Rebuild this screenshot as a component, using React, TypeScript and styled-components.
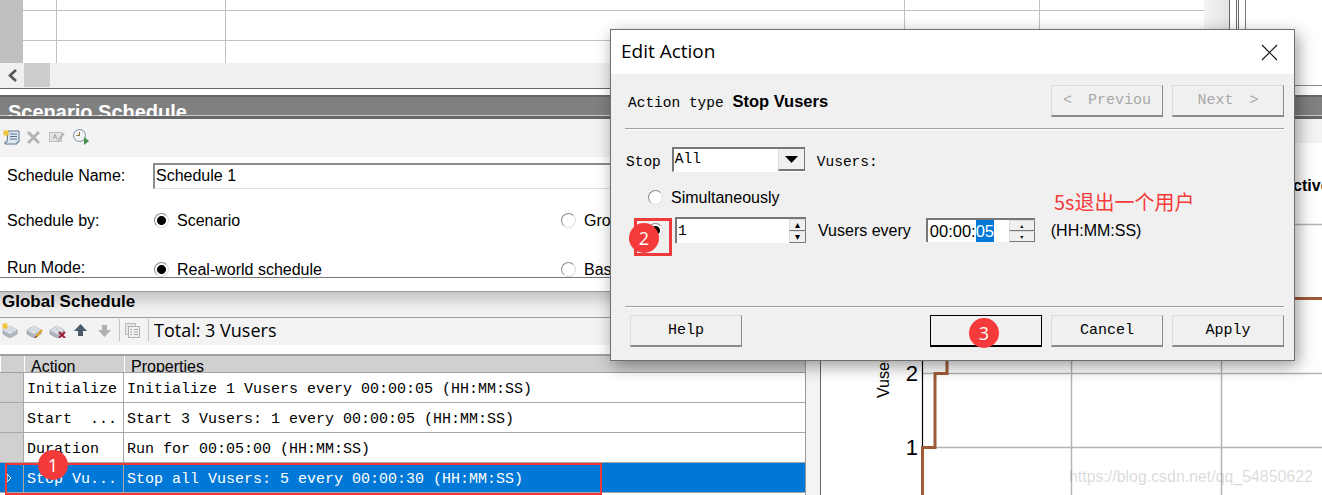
import { createGlobalStyle, styled } from 'styled-components';

const GlobalStyle = createGlobalStyle`
  html, body {
    margin: 0;
    padding: 0;
    background: #fff;
  }
  * {
    box-sizing: border-box;
  }
`;

const MONO = `"Liberation Mono", monospace`;
const SANS = `"Liberation Sans", Arial, sans-serif`;
const UI = `"Open Sans", "Noto Sans", sans-serif`;

type Step = { action: string; detail: string; selected?: boolean };

const STEPS: Step[] = [
  { action: 'Initialize', detail: 'Initialize 1 Vusers every 00:00:05 (HH:MM:SS)' },
  { action: 'Start  ...', detail: 'Start 3 Vusers: 1 every 00:00:05 (HH:MM:SS)' },
  { action: 'Duration', detail: 'Run for 00:05:00 (HH:MM:SS)' },
  { action: 'Stop Vu...', detail: 'Stop all Vusers: 5 every 00:00:30 (HH:MM:SS)', selected: true },
];

// 16px toolbar icons, redrawn by hand
const Star = () => <path d="M3 0l.8 2 2-.8-.8 2 2 .8-2 .8.8 2-2-.8-.8 2-.8-2-2 .8.8-2-2-.8 2-.8-.8-2 2 .8z" fill="#f2c23a" />;

const ScriptIcon = () => (
  <svg width="17" height="16" viewBox="0 0 17 16">
    <path d="M5 2h11v11H14v2H2v-2h2z" fill="#dfe8f2" stroke="#5a7590" />
    <path d="M7 5h7M7 7.500h7M7 10h7" stroke="#54708c" />
    <Star />
  </svg>
);

const CrossIcon = () => (
  <svg width="13" height="13" viewBox="0 0 13 13">
    <path d="M1 1l11 11M12 1L1 12" stroke="#b4b4b4" strokeWidth="3" />
  </svg>
);

const EditIcon = () => (
  <svg width="16" height="12" viewBox="0 0 16 12">
    <rect x="0.500" y="1.500" width="12" height="9" fill="#e4e4e4" stroke="#bdbdbd" />
    <path d="M4 8l2-5 2 5M5 6.500h2" stroke="#aaa" fill="none" />
    <path d="M9 10l6-8" stroke="#b4b4b4" strokeWidth="2" />
  </svg>
);

const ClockIcon = () => (
  <svg width="17" height="16" viewBox="0 0 17 16">
    <circle cx="6.500" cy="6.500" r="6" fill="#eef2f7" stroke="#7d8da0" />
    <path d="M6.500 3v3.500H3.500" stroke="#8a6a2a" fill="none" />
    <path d="M11 8l5 4-5 4z" fill="#3f8f4f" />
  </svg>
);

const Brick = () => (
  <>
    <path d="M1 8l7-4 7 4v4l-7 4-7-4z" fill="#aeb7c0" stroke="#8a95a0" strokeWidth="0.600" />
    <path d="M1 8l7 4 7-4-7-4z" fill="#dfe4e9" />
    <ellipse cx="6" cy="7" rx="1.800" ry="1" fill="#fff" stroke="#9aa4ae" strokeWidth="0.500" />
    <ellipse cx="10" cy="8" rx="1.800" ry="1" fill="#fff" stroke="#9aa4ae" strokeWidth="0.500" />
  </>
);

const BrickNewIcon = () => (
  <svg width="17" height="16" viewBox="0 0 17 16">
    <Brick />
    <Star />
  </svg>
);

const BrickEditIcon = () => (
  <svg width="17" height="16" viewBox="0 0 17 16">
    <Brick />
    <path d="M10 15l6-7" stroke="#e3a52c" strokeWidth="2.200" />
    <path d="M9 16l1.500-2" stroke="#7a3b2a" strokeWidth="1.200" />
  </svg>
);

const BrickDeleteIcon = () => (
  <svg width="17" height="16" viewBox="0 0 17 16">
    <Brick />
    <path d="M10 10l6 6M16 10l-6 6" stroke="#9c2036" strokeWidth="2" />
  </svg>
);

const ArrowIcon = ({ $down, $color }: { $down?: boolean; $color: string }) => (
  <svg width="13" height="13" viewBox="0 0 13 13">
    <path d={$down ? 'M4 1h5v5h4l-6.500 7L0 6h4z' : 'M6.500 0L13 7H9v5H4V7H0z'} fill={$color} />
  </svg>
);

const CopyIcon = () => (
  <svg width="15" height="15" viewBox="0 0 15 15">
    <rect x="0.500" y="0.500" width="10" height="11" fill="#e6e6e6" stroke="#bcbcbc" />
    <rect x="3.500" y="3.500" width="11" height="11" fill="#f0f0f0" stroke="#b0b0b0" />
    <path d="M5 6.500h2M9 6.500h4M5 9h2M9 9h4M5 11.500h2M9 11.500h4" stroke="#a8a8a8" />
  </svg>
);

const ActionChart = () => (
  <ChartSvg viewBox="0 0 501 352">
    <g stroke="#b4b4b4" strokeWidth="1.500">
      <path d="M101 81.500H501M101 155.500H501M101 230.500H501M101 304.500H501" />
      <path d="M250.500 0V352M400.500 0V352" />
    </g>
    <path d="M101.500 0V352" stroke="#000" strokeWidth="1.200" />
    <path d="M101.500 352V304.500H114V230.500H126V155.500H501" fill="none" stroke="#a05a38" strokeWidth="3" />
    <text x="428.500" y="48" fontFamily={SANS} fontSize="16" fontWeight="700" fill="#000">
      Interactive
    </text>
    <text transform="translate(68 255) rotate(-90)" fontFamily={SANS} fontSize="16" fill="#000">
      Vusers
    </text>
    <text x="97" y="238" textAnchor="end" fontFamily={SANS} fontSize="22" fill="#000">
      2
    </text>
    <text x="97" y="312" textAnchor="end" fontFamily={SANS} fontSize="22" fill="#000">
      1
    </text>
  </ChartSvg>
);

const App = () => {
  return (
    <Page>
      <GlobalStyle />

      <TopPane>
        <GridPane>
          <GridRows>
            <GridRow $height={11} />
            <GridRow $height={30} />
            <GridRow $height={22} $last />
          </GridRows>
          <HScroll>
            <ScrollArrow>
              <svg width="11" height="13" viewBox="0 0 11 13">
                <path d="M9 1L3 6.500 9 12" fill="none" stroke="#555" strokeWidth="2.600" />
              </svg>
            </ScrollArrow>
            <ScrollThumb />
          </HScroll>
        </GridPane>
        <SideStrip>
          <SideShade />
          <SideLines />
        </SideStrip>
      </TopPane>

      <ScenarioBar>
        <ScenarioTitle>Scenario Schedule</ScenarioTitle>
      </ScenarioBar>

      <LowerPane>
        <LeftPane>
          <Toolbar $height={38} $pad={3} $lift={2}>
            <ScriptIcon />
            <IconSlot $left={7}><CrossIcon /></IconSlot>
            <IconSlot $left={9}><EditIcon /></IconSlot>
            <IconSlot $left={8}><ClockIcon /></IconSlot>
          </Toolbar>

          <FormArea>
            <FormRow $height={26} $top={6}>
              <FieldLabel>Schedule Name:</FieldLabel>
              <NameInput>Schedule 1</NameInput>
            </FormRow>
            <FormRow $height={21} $top={21}>
              <FieldLabel>Schedule by:</FieldLabel>
              <Option>
                <Radio $checked />
                Scenario
              </Option>
              <Option>
                <Radio />
                Group
              </Option>
            </FormRow>
            <FormRow $height={21} $top={28}>
              <FieldLabel $up={3}>Run Mode:</FieldLabel>
              <Option>
                <Radio $checked />
                Real-world schedule
              </Option>
              <Option>
                <Radio />
                Basic
              </Option>
            </FormRow>
          </FormArea>

          <GlobalHeader>Global Schedule</GlobalHeader>

          <Toolbar $height={27} $pad={2} $lift={3}>
            <BrickNewIcon />
            <IconSlot $left={7}><BrickEditIcon /></IconSlot>
            <IconSlot $left={6}><BrickDeleteIcon /></IconSlot>
            <IconSlot $left={8}><ArrowIcon $color="#4a5a68" /></IconSlot>
            <IconSlot $left={11}><ArrowIcon $down $color="#b0b0b0" /></IconSlot>
            <ToolDivider $left={8} />
            <IconSlot $left={5}><CopyIcon /></IconSlot>
            <ToolDivider $left={8} />
            <TotalText>Total: 3 Vusers</TotalText>
          </Toolbar>

          <ScheduleTable>
            <HeaderRow>
              <HeaderCell />
              <HeaderCell>Action</HeaderCell>
              <HeaderCell>Properties</HeaderCell>
            </HeaderRow>
            {STEPS.map((step) => (
              <StepRow key={step.action} $selected={step.selected}>
                <Selector $selected={step.selected}>
                  {step.selected && (
                    <svg width="6" height="10" viewBox="0 0 6 10">
                      <path d="M1 1l4 4-4 4z" fill="none" stroke="#fff" />
                    </svg>
                  )}
                </Selector>
                <ActionCell>{step.action}</ActionCell>
                <DetailCell>{step.detail}</DetailCell>
              </StepRow>
            ))}
          </ScheduleTable>
        </LeftPane>

        <RightPane>
          <Gutter />
          <ChartPane>
            <ChartToolbar />
            <ActionChart />
          </ChartPane>
        </RightPane>
      </LowerPane>

      <Watermark>https://blog.csdn.net/qq_54850622</Watermark>

      <Dialog>
        <TitleBar>
          <DialogTitle>Edit Action</DialogTitle>
          <CloseGlyph width="17" height="17" viewBox="0 0 17 17">
            <path d="M1 1l15 15M16 1L1 16" stroke="#111" strokeWidth="1.100" />
          </CloseGlyph>
        </TitleBar>
        <DialogBody>
          <ActionRow>
            <ActionType>
              Action type <strong>Stop Vusers</strong>
            </ActionType>
            <ButtonGroup>
              <DialogButton $disabled>
                <span>&lt;</span>
                <span>Previou</span>
              </DialogButton>
              <DialogButton $disabled>
                <span>Next</span>
                <span>&gt;</span>
              </DialogButton>
            </ButtonGroup>
          </ActionRow>
          <Separator $top={11} />
          <StopRow>
            <MonoLabel>Stop</MonoLabel>
            <Select>
              <SelectValue>All</SelectValue>
              <SelectButton>
                <svg width="13" height="7" viewBox="0 0 13 7">
                  <path d="M0 0h13L6.500 7z" fill="#000" />
                </svg>
              </SelectButton>
            </Select>
            <MonoLabel>Vusers:</MonoLabel>
          </StopRow>
          <RadioRow>
            <Radio />
            <DialogText>Simultaneously</DialogText>
          </RadioRow>
          <EveryRow>
            <Radio $checked />
            <SpinField>
              <SpinValue>1</SpinValue>
              <SpinButtons>
                <SpinButton>▴</SpinButton>
                <SpinButton>▾</SpinButton>
              </SpinButtons>
            </SpinField>
            <DialogText>Vusers every</DialogText>
            <TimeField>
              <TimeValue>
                00:00:<Highlight>05</Highlight>
              </TimeValue>
              <TimeButtons>
                <SpinButton $small>▴</SpinButton>
                <SpinButton $small>▾</SpinButton>
              </TimeButtons>
            </TimeField>
            <FormatText>(HH:MM:SS)</FormatText>
          </EveryRow>
          <Separator $top={63} />
          <Footer>
            <DialogButton>Help</DialogButton>
            <ButtonGroup>
              <DialogButton $primary />
              <DialogButton>Cancel</DialogButton>
              <DialogButton>Apply</DialogButton>
            </ButtonGroup>
          </Footer>
        </DialogBody>
      </Dialog>

      <Note>5s退出一个用户</Note>
      <RedBox $x={5} $y={463} $w={597} $h={32} $line={2} />
      <RedBox $x={634} $y={218} $w={38} $h={38} $line={3} />
      <Badge $x={53} $y={465}>1</Badge>
      <Badge $x={644} $y={238}>2</Badge>
      <Badge $x={984} $y={333}>3</Badge>
    </Page>
  );
};

export default App;

const Page = styled.div`
  position: relative;
  width: 1322px;
  height: 495px;
  overflow: hidden;
  display: flex;
  flex-direction: column;
  background: #fff;
  font-family: ${SANS};
  color: #000;
`;

const TopPane = styled.div`
  display: flex;
  height: 89px;
  flex: none;
`;

const GridPane = styled.div`
  width: 1204px;
  display: flex;
  flex-direction: column;
  border-bottom: 1px solid #666;
`;

const GridRows = styled.div`
  height: 63px;
  flex: none;
`;

const GridRow = styled.div<{ $height: number; $last?: boolean }>`
  height: ${(p) => p.$height}px;
  border-bottom: ${(p) => (p.$last ? 'none' : '1px solid #c0c0c0')};
  background:
    linear-gradient(#c0c0c0, #c0c0c0) 0 0 / 23px 100% no-repeat,
    linear-gradient(#c0c0c0, #c0c0c0) 56px 0 / 1px 100% no-repeat,
    linear-gradient(#c0c0c0, #c0c0c0) 225px 0 / 1px 100% no-repeat,
    linear-gradient(#c0c0c0, #c0c0c0) 904px 0 / 1px 100% no-repeat,
    linear-gradient(#c0c0c0, #c0c0c0) 1039px 0 / 1px 100% no-repeat;
`;

const HScroll = styled.div`
  flex: 1;
  display: flex;
  background: #f0f0f0;
  padding-bottom: 1px;
`;

const ScrollArrow = styled.div`
  width: 24px;
  display: flex;
  align-items: center;
  justify-content: center;
`;

const ScrollThumb = styled.div`
  width: 26px;
  background: #cdcdcd;
`;

const SideStrip = styled.div`
  flex: 1;
  display: flex;
  height: 86px;
  border-bottom: 1px solid #8a8a8a;
`;

const SideShade = styled.div`
  width: 25px;
  background: linear-gradient(to right, #f4f4f4, #e4e4e4);
`;

const SideLines = styled.div`
  width: 17px;
  border-left: 1px solid #666;
  border-right: 1px solid #777;
  background: linear-gradient(#666, #666) 6px 0 / 1px 100% no-repeat,
    linear-gradient(#666, #666) 8px 0 / 1px 100% no-repeat;
`;

const ScenarioBar = styled.div`
  margin-top: 6px;
  height: 24px;
  flex: none;
  overflow: hidden;
  background: #808080;
  border-top: 2px solid #666;
  border-bottom: 3px solid #666;
  box-shadow: inset 0 -1px 0 #ccc;
  padding-left: 8px;
`;

const ScenarioTitle = styled.div`
  font-size: 20px;
  font-weight: 700;
  line-height: 24px;
  color: #fff;
  margin-top: 3px;
`;

const LowerPane = styled.div`
  flex: 1;
  display: flex;
  min-height: 0;
`;

const LeftPane = styled.div`
  width: 806px;
  flex: none;
  display: flex;
  flex-direction: column;
`;

const Toolbar = styled.div<{ $height: number; $pad: number; $lift: number }>`
  height: ${(p) => p.$height}px;
  flex: none;
  display: flex;
  align-items: center;
  padding-left: ${(p) => p.$pad}px;
  padding-bottom: ${(p) => p.$lift}px;
  background: #f3f3f3;
`;

const IconSlot = styled.span<{ $left: number }>`
  display: flex;
  margin-left: ${(p) => p.$left}px;
`;

const ToolDivider = styled.span<{ $left: number }>`
  width: 1px;
  height: 22px;
  background: #c4c4c4;
  margin-left: ${(p) => p.$left}px;
`;

const TotalText = styled.span`
  margin-left: 5px;
  font-family: ${UI};
  font-size: 18px;
  line-height: 24px;
  white-space: nowrap;
`;

const FormArea = styled.div`
  height: 134px;
  flex: none;
  overflow: hidden;
  background:
    linear-gradient(#777, #777) 0 120px / 100% 1px no-repeat,
    #fff;
  padding-left: 7px;
`;

const FormRow = styled.div<{ $height: number; $top: number }>`
  display: flex;
  align-items: center;
  height: ${(p) => p.$height}px;
  margin-top: ${(p) => p.$top}px;
  font-size: 16px;
`;

const FieldLabel = styled.div<{ $up?: number }>`
  width: 146px;
  flex: none;
  white-space: nowrap;
  margin-top: ${(p) => -(p.$up ?? 0)}px;
`;

const NameInput = styled.div`
  width: 640px;
  height: 26px;
  flex: none;
  padding-left: 1px;
  line-height: 22px;
  border-top: 2px solid #8a8a8a;
  border-left: 2px solid #8a8a8a;
  border-bottom: 1px solid #e0e0e0;
`;

const Option = styled.div`
  width: 407px;
  flex: none;
  display: flex;
  align-items: center;
  gap: 8px;
  padding-left: 1px;
  white-space: nowrap;
`;

const Radio = styled.span<{ $checked?: boolean }>`
  width: 15px;
  height: 15px;
  flex: none;
  border-radius: 50%;
  border: 1.500px solid #8d8d8d;
  border-right-color: #ddd;
  border-bottom-color: #ddd;
  background: ${(p) =>
    p.$checked ? 'radial-gradient(circle, #000 0 4px, #fff 5px)' : '#fff'};
`;

const GlobalHeader = styled.div`
  height: 27px;
  flex: none;
  padding-left: 2px;
  border-top: 1px solid #999;
  border-bottom: 1px solid #999;
  background: linear-gradient(#c6c6c6, #ececec 60%, #f4f4f4);
  font-size: 17px;
  font-weight: 700;
  line-height: 20px;
`;

const ScheduleTable = styled.div`
  margin-top: 9px;
  flex: 1;
  overflow: hidden;
  border-top: 2px solid #a0a0a0;
  border-right: 1px solid #9a9a9a;
`;

const HeaderRow = styled.div`
  display: grid;
  grid-template-columns: 24px 100px 1fr;
  height: 17px;
  background: #d0d0d0;
  border-bottom: 1px solid #a0a0a0;
  overflow: hidden;
`;

const HeaderCell = styled.div`
  padding: 2px 0 0 6px;
  border-left: 1px solid #fff;
  font-size: 16px;
  line-height: 18px;
  white-space: nowrap;
`;

const StepRow = styled.div<{ $selected?: boolean }>`
  display: grid;
  grid-template-columns: 24px 100px 1fr;
  grid-template-rows: 29px;
  height: 30px;
  font-family: ${MONO};
  font-size: 15px;
  line-height: 33px;
  white-space: pre;
  background: ${(p) => (p.$selected ? '#0078d7' : '#fff')};
  color: ${(p) => (p.$selected ? '#fff' : '#000')};
  border-bottom: 1px solid #a8a8a8;
`;

const Selector = styled.div<{ $selected?: boolean }>`
  display: flex;
  align-items: center;
  padding-left: 6px;
  background: ${(p) => (p.$selected ? '#0078d7' : '#d0d0d0')};
  border-right: 1px solid #a8a8a8;
`;

const ActionCell = styled.div`
  padding-left: 3px;
  border-right: 1px solid #a8a8a8;
`;

const DetailCell = styled.div`
  padding-left: 3px;
`;

const RightPane = styled.div`
  flex: 1;
  display: flex;
  min-width: 0;
`;

const Gutter = styled.div`
  width: 14px;
  flex: none;
  background: #f4f4f4;
`;

const ChartPane = styled.div`
  flex: 1;
  min-width: 0;
  display: flex;
  flex-direction: column;
  border-left: 1px solid #666;
`;

const ChartToolbar = styled.div`
  height: 24px;
  flex: none;
  background: #f3f3f3;
`;

const ChartSvg = styled.svg`
  display: block;
  width: 501px;
  height: 352px;
`;

const Watermark = styled.div`
  position: absolute;
  left: 1069px;
  top: 467px;
  font-size: 15.900px;
  line-height: 20px;
  color: rgba(120, 120, 120, 0.28);
  white-space: nowrap;
`;

const Dialog = styled.div`
  position: absolute;
  left: 610px;
  top: 29px;
  width: 685px;
  height: 332px;
  display: flex;
  flex-direction: column;
  background: #f0f0f0;
  border: 1px solid #6f6f6f;
  box-shadow: 3px 5px 16px rgba(0, 0, 0, 0.4);
`;

const TitleBar = styled.div`
  height: 44px;
  flex: none;
  display: flex;
  align-items: center;
  justify-content: space-between;
  padding: 0 16px 0 10px;
  background: #fff;
`;

const DialogTitle = styled.div`
  font-family: ${UI};
  font-size: 19px;
  padding-bottom: 2px;
`;

const CloseGlyph = styled.svg`
  display: block;
`;

const DialogBody = styled.div`
  flex: 1;
  display: flex;
  flex-direction: column;
  padding: 0 10px 0 14px;
`;

const ActionRow = styled.div`
  margin-top: 11px;
  height: 32px;
  flex: none;
  display: flex;
  align-items: center;
  justify-content: space-between;
  padding-left: 3px;
`;

const ActionType = styled.div`
  font-family: ${MONO};
  font-size: 14.500px;
  white-space: pre;

  strong {
    font-family: ${SANS};
    font-size: 16.500px;
  }
`;

const ButtonGroup = styled.div`
  display: flex;
  gap: 9px;
`;

const DialogButton = styled.div<{ $disabled?: boolean; $primary?: boolean }>`
  width: 112px;
  height: 32px;
  display: flex;
  align-items: center;
  justify-content: center;
  gap: 16px;
  font-family: ${MONO};
  font-size: 15px;
  color: ${(p) => (p.$disabled ? '#a8a8a8' : '#000')};
  border: 1px solid ${(p) => (p.$primary ? '#000' : '#dcdcdc')};
  border-right: 1px solid ${(p) => (p.$primary ? '#000' : '#8a8a8a')};
  border-bottom: 2px solid ${(p) => (p.$primary ? '#000' : '#8a8a8a')};
  background: #f0f0f0;
`;

const Separator = styled.div<{ $top: number }>`
  height: 2px;
  flex: none;
  margin-top: ${(p) => p.$top}px;
  border-top: 1px solid #a0a0a0;
  border-bottom: 1px solid #fff;
`;

const StopRow = styled.div`
  margin-top: 17px;
  height: 25px;
  flex: none;
  display: flex;
  align-items: center;
  padding-left: 1px;
`;

const MonoLabel = styled.span`
  font-family: ${MONO};
  font-size: 14.500px;
  white-space: nowrap;
  padding-top: 5px;
`;

const Select = styled.div`
  width: 133px;
  height: 25px;
  margin: 0 12px 0 11px;
  flex: none;
  display: flex;
  background: #fff;
  border-top: 2px solid #777;
  border-left: 2px solid #777;
  border-bottom: 1px solid #fff;
`;

const SelectValue = styled.span`
  flex: 1;
  padding-left: 1px;
  font-family: ${MONO};
  font-size: 14.500px;
  line-height: 20px;
`;

const SelectButton = styled.span`
  width: 27px;
  display: flex;
  align-items: center;
  justify-content: center;
  background: #f0f0f0;
  border-right: 1px solid #777;
  border-bottom: 2px solid #777;
  border-left: 1px solid #ddd;
`;

const DialogText = styled.span`
  font-family: ${SANS};
  font-size: 16px;
  white-space: nowrap;
  padding-top: 2px;
`;

const RadioRow = styled.div`
  margin-top: 15px;
  height: 20px;
  flex: none;
  display: flex;
  align-items: center;
  gap: 8px;
  padding-left: 23px;
`;

const EveryRow = styled.div`
  margin-top: 10px;
  height: 26px;
  flex: none;
  display: flex;
  align-items: center;
  padding-left: 23px;
`;

const SpinField = styled.div`
  width: 131px;
  height: 26px;
  margin: 0 12px;
  flex: none;
  display: flex;
  background: #fff;
  border-top: 2px solid #777;
  border-left: 2px solid #777;
`;

const SpinValue = styled.span`
  flex: 1;
  padding-left: 1px;
  font-family: ${MONO};
  font-size: 14.500px;
  line-height: 24px;
`;

const SpinButtons = styled.span`
  width: 17px;
  display: flex;
  flex-direction: column;
`;

const SpinButton = styled.span<{ $small?: boolean }>`
  flex: 1;
  display: flex;
  align-items: center;
  justify-content: center;
  overflow: hidden;
  font-family: "DejaVu Sans", sans-serif;
  font-size: ${(p) => (p.$small ? 6 : 10)}px;
  line-height: 1;
  background: #f0f0f0;
  border: 1px solid #ddd;
  border-right-color: #777;
  border-bottom-color: #777;
`;

const TimeField = styled.div`
  width: 109px;
  height: 24px;
  margin-left: 15px;
  flex: none;
  display: flex;
  background: #fff;
  border-top: 2px solid #777;
  border-left: 2px solid #777;
`;

const TimeValue = styled.span`
  flex: 1;
  padding-left: 2px;
  font-size: 16.500px;
  line-height: 22px;
  white-space: nowrap;
`;

const Highlight = styled.span`
  display: inline-block;
  background: #0078d7;
  color: #fff;
`;

const TimeButtons = styled.span`
  width: 26px;
  display: flex;
  flex-direction: column;
`;

const FormatText = styled.span`
  margin-left: 16px;
  font-size: 16px;
  white-space: nowrap;
  padding-top: 2px;
`;

const Footer = styled.div`
  margin-top: 7px;
  flex: none;
  display: flex;
  justify-content: space-between;
  padding-left: 5px;
`;

const Note = styled.div`
  position: absolute;
  left: 1054px;
  top: 190px;
  font-family: "Noto Sans CJK SC", sans-serif;
  font-size: 20px;
  line-height: 24px;
  color: #f53b3b;
  white-space: nowrap;
`;

const RedBox = styled.div<{ $x: number; $y: number; $w: number; $h: number; $line: number }>`
  position: absolute;
  left: ${(p) => p.$x}px;
  top: ${(p) => p.$y}px;
  width: ${(p) => p.$w}px;
  height: ${(p) => p.$h}px;
  border: ${(p) => p.$line}px solid #ef3a3a;
`;

const Badge = styled.div<{ $x: number; $y: number }>`
  position: absolute;
  left: ${(p) => p.$x - 15}px;
  top: ${(p) => p.$y - 15}px;
  width: 30px;
  height: 30px;
  display: flex;
  align-items: center;
  justify-content: center;
  border-radius: 50%;
  background: #f43a3a;
  color: #fff;
  font-family: ${UI};
  font-size: 18px;
`;
